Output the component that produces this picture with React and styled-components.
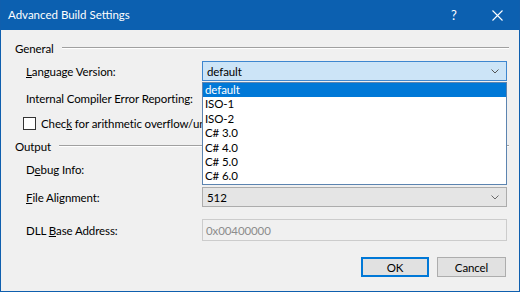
import React from 'react';
import styled, { createGlobalStyle } from 'styled-components';

const GlobalStyle = createGlobalStyle`
  html, body {
    margin: 0;
    padding: 0;
    background: #f0f0f0;
  }
  * {
    box-sizing: border-box;
  }
`;

const FONT = `Lato, 'Noto Sans', sans-serif`;

const languageVersions = ['default', 'ISO-1', 'ISO-2', 'C# 3.0', 'C# 4.0', 'C# 5.0', 'C# 6.0'];

function Chevron({ color = '#666' }) {
  return (
    <svg width="8" height="5" viewBox="0 0 8 5">
      <path d="M0.5 0.5 L4 4 L7.5 0.5" fill="none" stroke={color} strokeWidth="1" />
    </svg>
  );
}

function ComboBox({ value = '', variant = '' }) {
  return (
    <Combo $variant={variant}>
      <span>{value}</span>
      <Chevron color={variant === 'focused' ? '#555' : '#6a6a6a'} />
    </Combo>
  );
}

function GroupHeader({ children, top }) {
  return (
    <Header $top={top}>
      <span>{children}</span>
      <Etched />
    </Header>
  );
}

export default function App() {
  return (
    <>
      <GlobalStyle />
      <Window>
        <TitleBar>
          <Title>Advanced Build Settings</Title>
          <TitleButtons>
            <TitleButton>?</TitleButton>
            <TitleButton>
              <svg width="11" height="11" viewBox="0 0 11 11">
                <path d="M0.5 0.5 L10.5 10.5 M10.5 0.5 L0.5 10.5" stroke="#fff" strokeWidth="1.1" />
              </svg>
            </TitleButton>
          </TitleButtons>
        </TitleBar>
        <Body>
          <GroupHeader top={10}>General</GroupHeader>
          <Row $top={5} $height={20}>
            <Label>
              <u>L</u>anguage Version:
            </Label>
            <ComboWrap>
              <ComboBox value="default" variant="focused" />
              <DropList>
                {languageVersions.map((v, i) => (
                  <DropItem key={v} $selected={i === 0}>
                    {v}
                  </DropItem>
                ))}
              </DropList>
            </ComboWrap>
          </Row>
          <Row $top={7} $height={20}>
            <Label>Internal Compiler Error Reporting:</Label>
            <ComboBox />
          </Row>
          <CheckRow>
            <CheckBox />
            <CheckLabel>
              Chec<u>k</u> for arithmetic overflow/underflow
            </CheckLabel>
          </CheckRow>
          <GroupHeader top={7}>Output</GroupHeader>
          <Row $top={5} $height={20}>
            <Label>
              D<u>e</u>bug Info:
            </Label>
            <ComboBox />
          </Row>
          <Row $top={8} $height={20}>
            <Label>
              <u>F</u>ile Alignment:
            </Label>
            <ComboBox value="512" />
          </Row>
          <Row $top={12} $height={22}>
            <Label>
              DLL <u>B</u>ase Address:
            </Label>
            <TextBox>0x00400000</TextBox>
          </Row>
          <Buttons>
            <Button $primary>OK</Button>
            <Button>Cancel</Button>
          </Buttons>
        </Body>
      </Window>
    </>
  );
}

const Window = styled.div`
  width: 520px;
  height: 292px;
  display: flex;
  flex-direction: column;
  background: #f0f0f0;
  border: 1px solid #0f5fae;
  border-top: none;
  font-family: ${FONT};
  font-size: 11.5px;
  letter-spacing: -0.1px;
  color: #000;
  overflow: hidden;
`;

const TitleBar = styled.div`
  height: 30px;
  flex: none;
  display: flex;
  align-items: center;
  justify-content: space-between;
  background: #0c60b0;
  color: #fff;
  margin: 0 -1px;
  padding-left: 8px;
  letter-spacing: 0;
`;

const Title = styled.div`
  font-size: 11.5px;
  padding-bottom: 1px;
`;

const TitleButtons = styled.div`
  display: flex;
  height: 100%;
`;

const TitleButton = styled.div`
  width: 44px;
  height: 100%;
  display: flex;
  align-items: center;
  justify-content: center;
  font-size: 13px;
  padding-left: 4px;
  &:last-child {
    width: 46px;
    padding-left: 0;
  }
`;

const Body = styled.div`
  flex: 1;
  display: flex;
  flex-direction: column;
  padding: 0 12px 0 14px;
`;

const Header = styled.div`
  display: flex;
  align-items: center;
  height: 16px;
  margin-top: ${({ $top }) => $top}px;
  gap: 8px;
  span {
    white-space: nowrap;
  }
`;

const Etched = styled.div`
  flex: 1;
  height: 2px;
  border-top: 1px solid #a0a0a0;
  border-bottom: 1px solid #ffffff;
  margin-right: -2px;
`;

const Row = styled.div`
  display: grid;
  grid-template-columns: 187px 305px;
  align-items: center;
  height: ${({ $height }) => $height}px;
  margin-top: ${({ $top }) => $top}px;
`;

const Label = styled.div`
  padding-left: 11px;
  white-space: nowrap;
`;

const ComboWrap = styled.div`
  position: relative;
  height: 100%;
`;

const Combo = styled.div`
  height: 20px;
  display: flex;
  align-items: center;
  justify-content: space-between;
  padding: 0 7px 0 4px;
  border: 1px solid ${({ $variant }) => ($variant === 'focused' ? '#3d86cf' : '#acacac')};
  background: ${({ $variant }) => ($variant === 'focused' ? '#cce4f7' : '#e5e5e5')};
`;

const DropList = styled.div`
  position: absolute;
  top: 21px;
  left: 0;
  width: 305px;
  height: 103px;
  background: #fff;
  border: 1px solid #5c84b0;
  z-index: 2;
`;

const DropItem = styled.div`
  height: 14.4px;
  line-height: 14.4px;
  padding-left: 2px;
  background: ${({ $selected }) => ($selected ? '#0078d7' : 'transparent')};
  color: ${({ $selected }) => ($selected ? '#fff' : '#000')};
`;

const CheckRow = styled.div`
  display: flex;
  align-items: center;
  height: 15px;
  margin-top: 8px;
  padding-left: 8px;
  gap: 5px;
  white-space: nowrap;
`;

const CheckBox = styled.div`
  width: 13px;
  height: 13px;
  border: 1px solid #333;
  background: #fff;
  flex: none;
`;

const CheckLabel = styled.span``;

const TextBox = styled.div`
  height: 22px;
  display: flex;
  align-items: center;
  padding-left: 3px;
  border: 1px solid #cccccc;
  background: #f0f0f0;
  color: #8c8c8c;
`;

const Buttons = styled.div`
  display: flex;
  justify-content: flex-end;
  gap: 8px;
  margin-top: 16px;
  padding-right: 1px;
`;

const Button = styled.div`
  width: ${({ $primary }) => ($primary ? '68px' : '69px')};
  height: 20px;
  display: flex;
  align-items: center;
  justify-content: center;
  background: #e1e1e1;
  border: 1px solid ${({ $primary }) => ($primary ? '#0078d7' : '#adadad')};
  box-shadow: ${({ $primary }) => ($primary ? 'inset 0 0 0 1px #0078d7' : 'none')};
`;
